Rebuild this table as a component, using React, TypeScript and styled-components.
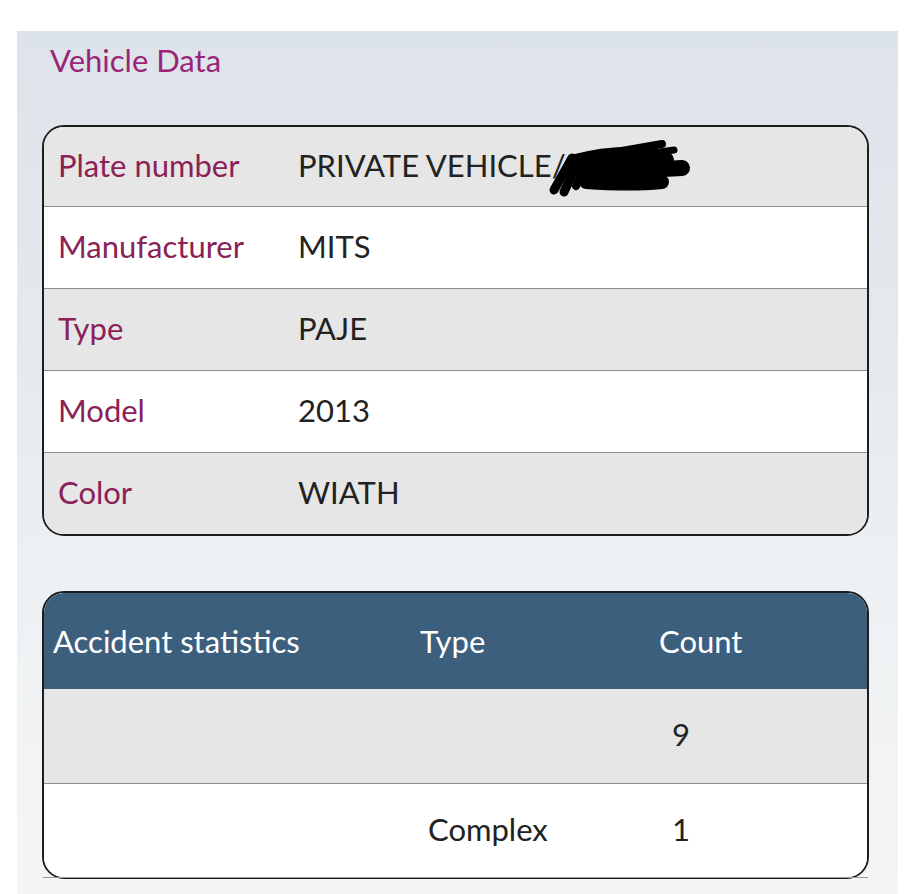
import React from "react";
import styled, { createGlobalStyle } from "styled-components";

const Global = createGlobalStyle`
  html, body { margin: 0; padding: 0; background: #ffffff; }
  body { font-family: "Lato", "Open Sans", sans-serif; }
  * { box-sizing: border-box; }
`;

const Page = styled.div`
  width: 905px;
  height: 894px;
  padding: 31px 7px 0 17px;
  background: #ffffff;
  overflow: hidden;
`;

const Panel = styled.div`
  height: 100%;
  padding: 11px 29px 0 25px;
  background: linear-gradient(180deg, #dde3ea 0%, #e6eaee 40%, #eef1f3 65%, #f4f5f6 100%);
  display: flex;
  flex-direction: column;
`;

const Title = styled.h1`
  margin: 0 0 0 8px;
  font-size: 31px;
  line-height: 36px;
  font-weight: 400;
  color: #9a2478;
`;

const Card = styled.div<{ $top: number }>`
  margin-top: ${(p) => p.$top}px;
  border: 2px solid #1e1e1e;
  border-radius: 22px;
  overflow: hidden;
  background: #ffffff;
`;

const InfoRow = styled.div<{ $shade: boolean; $first?: boolean }>`
  display: grid;
  grid-template-columns: 240px 1fr;
  align-items: center;
  height: ${(p) => (p.$first ? 79 : 82)}px;
  padding: 0 0 4px 14px;
  background: ${(p) => (p.$shade ? "#e6e6e6" : "#ffffff")};
  border-top: ${(p) => (p.$first ? "none" : "1px solid #8c8c8c")};
`;

const Label = styled.span`
  font-size: 31px;
  color: #8a2157;
`;

const Value = styled.span`
  font-size: 31px;
  color: #222222;
  display: flex;
  align-items: center;
`;

const Scribble = styled.svg`
  margin-left: -20px;
  margin-top: 6px;
  flex: none;
`;

const StatsGrid = styled.div<{ $shade?: boolean; $head?: boolean; $h: number }>`
  display: grid;
  grid-template-columns: 366px 240px 1fr;
  align-items: center;
  height: ${(p) => p.$h}px;
  padding-bottom: ${(p) => (p.$head ? 0 : 4)}px;
  background: ${(p) => (p.$head ? "#3d5f7e" : p.$shade ? "#e6e6e6" : "#ffffff")};
  border-top: ${(p) => (p.$head || p.$shade ? "none" : "1px solid #8c8c8c")};
`;

const Cell = styled.span<{ $pad: number; $head?: boolean }>`
  padding-left: ${(p) => p.$pad}px;
  font-size: 31px;
  color: ${(p) => (p.$head ? "#ffffff" : "#222222")};
`;

const CardWrap = styled.div`
  position: relative;
  &::after {
    content: "";
    position: absolute;
    left: 1px;
    right: 1px;
    bottom: 1px;
    height: 1px;
    background: #9a9a9a;
  }
`;

const rows = [
  ["Plate number", "PRIVATE VEHICLE/"],
  ["Manufacturer", "MITS"],
  ["Type", "PAJE"],
  ["Model", "2013"],
  ["Color", "WIATH"],
];

function Redaction() {
  return (
    <Scribble width="146" height="60" viewBox="0 0 146 60">
      <g stroke="#000" strokeLinecap="round" fill="none">
        <path d="M8 52 L26 20" strokeWidth="9" />
        <path d="M18 54 L32 24" strokeWidth="9" />
        <path d="M30 48 L42 22" strokeWidth="8" />
        <path d="M30 24 C60 16 90 14 120 22" strokeWidth="16" />
        <path d="M36 34 C70 32 104 32 136 30" strokeWidth="16" />
        <path d="M40 44 C70 46 95 46 116 44" strokeWidth="14" />
        <path d="M70 14 L116 6" strokeWidth="8" />
        <path d="M100 16 L128 12" strokeWidth="7" />
      </g>
    </Scribble>
  );
}

export default function App() {
  return (
    <>
      <Global />
      <Page>
        <Panel>
          <Title>Vehicle Data</Title>
          <Card $top={47}>
            {rows.map(([k, v], i) => (
              <InfoRow key={k} $shade={i % 2 === 0} $first={i === 0}>
                <Label>{k}</Label>
                <Value>
                  {v}
                  {i === 0 && <Redaction />}
                </Value>
              </InfoRow>
            ))}
          </Card>
          <CardWrap>
            <Card $top={55}>
              <StatsGrid $head $h={96}>
                <Cell $head $pad={9}>Accident statistics</Cell>
                <Cell $head $pad={10}>Type</Cell>
                <Cell $head $pad={9}>Count</Cell>
              </StatsGrid>
              <StatsGrid $shade $h={94}>
                <Cell $pad={0}></Cell>
                <Cell $pad={18}></Cell>
                <Cell $pad={22}>9</Cell>
              </StatsGrid>
              <StatsGrid $h={94}>
                <Cell $pad={0}></Cell>
                <Cell $pad={18}>Complex</Cell>
                <Cell $pad={22}>1</Cell>
              </StatsGrid>
            </Card>
          </CardWrap>
        </Panel>
      </Page>
    </>
  );
}
